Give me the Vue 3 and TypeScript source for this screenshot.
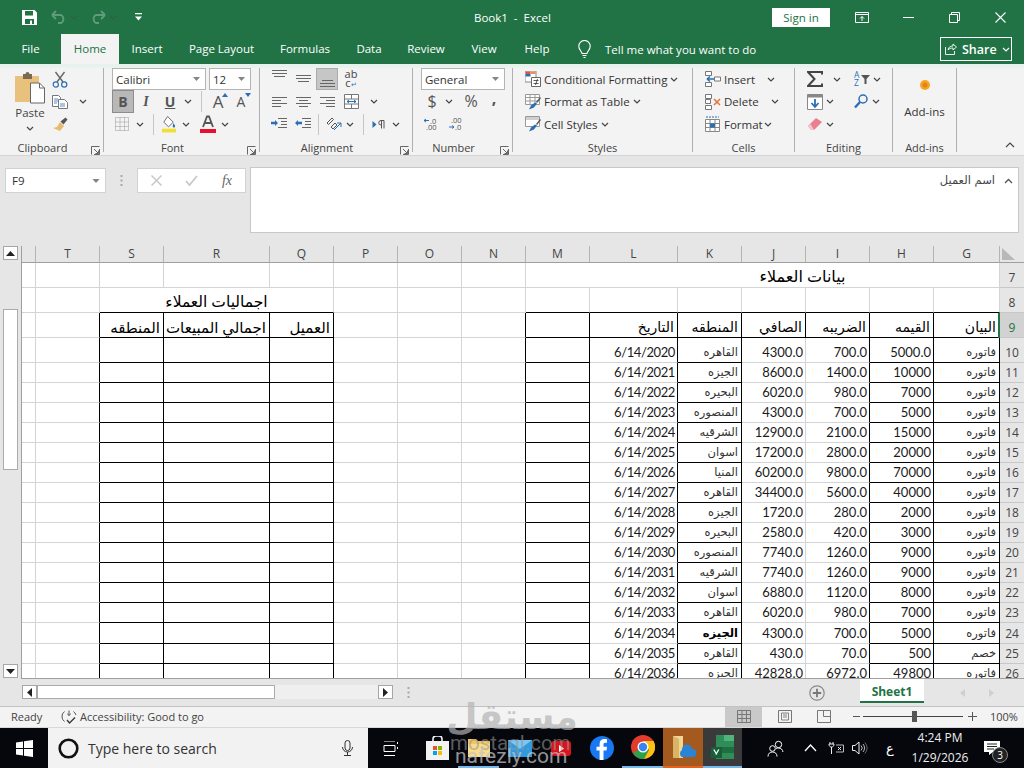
<template>
  <div class="app">
    <svg class="sprite" aria-hidden="true">
      <symbol id="chev" viewBox="0 0 8 5"><path d="M1 1l3 3 3-3" fill="none" stroke="#444" stroke-width="1.2" /></symbol>
      <symbol id="launch" viewBox="0 0 9 9"><path d="M.5 8.5V.5h8M8.5 3v5.500H3M3 3l4.500 4.500M7.500 4.500v3h-3" fill="none" stroke="#666" stroke-width="1" /></symbol>
      <symbol id="tri-up" viewBox="0 0 9 5"><path d="M4.500 0L9 5H0z" fill="#222" /></symbol>
      <symbol id="tri-down" viewBox="0 0 9 5"><path d="M0 0h9L4.500 5z" fill="#222" /></symbol>
    </svg>

    <header class="titlebar">
      <div class="qat">
        <svg class="save" width="15" height="15" viewBox="0 0 15 15"><path d="M0 0h12.500L15 2.500V15H0z" fill="#fff" /><path d="M3 1h8v4.500H3zM3 9h9v5H3z" fill="#217346" /><path d="M8 10.500h2V14H8z" fill="#fff" /></svg>
        <svg class="ml14" width="16" height="14" viewBox="0 0 16 14"><path d="M1 5l4-4M1 5l4 4M1 5h9a4.500 4.500 0 0 1 0 8H7" fill="none" stroke="#5f9c7c" stroke-width="1.800" /></svg>
        <svg class="ml3" width="8" height="5"><use href="#chev" class="faded" /></svg>
        <svg class="ml12" width="16" height="14" viewBox="0 0 16 14"><path d="M15 5l-4-4M15 5l-4 4M15 5H6a4.500 4.500 0 0 0 0 8h3" fill="none" stroke="#5f9c7c" stroke-width="1.800" /></svg>
        <svg class="ml3" width="8" height="5"><use href="#chev" class="faded" /></svg>
        <svg class="ml18" width="7" height="8" viewBox="0 0 7 8"><path d="M0 0h7v1.200H0zM0 3.500h7L3.500 7.500z" fill="#fff" /></svg>
      </div>
      <div class="doc-title">Book1&nbsp; -&nbsp; Excel</div>
      <button class="signin">Sign in</button>
      <div class="winbtn ml9">
        <svg width="14" height="11" viewBox="0 0 14 11"><path d="M.5.500h13v10H.5zM.5 2.500h13M7 9V4.500M5 6.500l2-2 2 2" fill="none" stroke="#fff" /></svg>
      </div>
      <div class="winbtn"><svg width="11" height="1"><path d="M0 .500h11" stroke="#fff" /></svg></div>
      <div class="winbtn">
        <svg width="11" height="11" viewBox="0 0 11 11"><path d="M.5 2.500h8v8h-8zM2.500 2.500v-2h8v8h-2" fill="none" stroke="#fff" /></svg>
      </div>
      <div class="winbtn"><svg width="11" height="11" viewBox="0 0 11 11"><path d="M.5.500l10 10M10.500.500l-10 10" stroke="#fff" stroke-width="1.100" /></svg></div>
    </header>

    <nav class="tabs">
      <span class="tab w-file">File</span>
      <span class="tab tab-on w-home">Home</span>
      <span class="tab w-insert">Insert</span>
      <span class="tab w-layout">Page Layout</span>
      <span class="tab w-formulas">Formulas</span>
      <span class="tab w-data">Data</span>
      <span class="tab w-review">Review</span>
      <span class="tab w-view">View</span>
      <span class="tab w-help">Help</span>
      <svg class="ml16" width="13" height="18" viewBox="0 0 13 18"><path d="M4 13.500C3.500 11 .8 9.800.8 6.200a5.700 5.700 0 0 1 11.400 0c0 3.600-2.700 4.800-3.200 7.300zM4.500 15.500h4M5.500 17.500h2" fill="none" stroke="#fff" stroke-width="1.100" /></svg>
      <span class="tellme">Tell me what you want to do</span>
      <div class="share">
        <svg width="12" height="12" viewBox="0 0 12 12"><path d="M.5 4v7.500h9V8M3 7c.5-3 2.500-4 5-4V1l3.500 3L8 7V5C5.800 5 4.200 5.500 3 7z" fill="none" stroke="#fff" stroke-width=".9" /></svg>
        <span>Share</span>
        <svg width="8" height="5" viewBox="0 0 8 5"><path d="M1 1l3 3 3-3" fill="none" stroke="#fff" stroke-width="1.200" /></svg>
      </div>
    </nav>

    <section class="ribbon">
      <div class="group g-clip">
        <div class="body flexrow">
          <div class="paste">
            <svg width="30" height="33" viewBox="0 0 30 33">
              <path d="M0 5h24v26H0z" fill="#e8c27d" />
              <path d="M8 3h2.500a2 2 0 0 1 4 0H17v5H8z" fill="#7b6a50" />
              <path d="M15.500 12h9l5 5v15h-14z" fill="#fff" stroke="#666" />
              <path d="M24.500 12v5h5" fill="none" stroke="#666" />
            </svg>
            <span class="paste-t">Paste</span>
            <svg class="chev" width="8" height="5"><use href="#chev" /></svg>
          </div>
          <div class="col ml7">
            <div class="row">
              <svg width="16" height="17" viewBox="0 0 16 17"><path d="M3.500 1L11 11M12.500 1L5 11" stroke="#666" stroke-width="1.400" /><circle cx="3.800" cy="13.500" r="2.600" fill="none" stroke="#2a6fb5" stroke-width="1.200" /><circle cx="12.200" cy="13.500" r="2.600" fill="none" stroke="#2a6fb5" stroke-width="1.200" /></svg>
            </div>
            <div class="row">
              <svg width="16" height="14" viewBox="0 0 16 14"><path d="M.5.500h6l2 2v9H.5z" fill="#fff" stroke="#777" /><path d="M6.500 4.500h6l3 3v6h-9z" fill="#fff" stroke="#777" /><path d="M2 4h4M2 6h4M2 8h3M8 9h5M8 11h5" stroke="#2a6fb5" stroke-width=".8" /></svg>
              <svg class="ml11" width="8" height="5"><use href="#chev" /></svg>
            </div>
            <div class="row">
              <svg width="16" height="15" viewBox="0 0 16 15"><path d="M8 5l4 4-4 5-7-3 4-1z" fill="#e6bb6e" /><path d="M8.500 4.500l5-4 2 2-4 5z" fill="#555" /></svg>
            </div>
          </div>
        </div>
        <div class="label">Clipboard<svg class="launcher" width="9" height="9"><use href="#launch" /></svg></div>
      </div>

      <div class="group g-font">
        <div class="body">
          <div class="row">
            <div class="combo w-fontname"><span>Calibri</span><svg width="7" height="4"><use href="#tri-down" class="dim" /></svg></div>
            <div class="combo w-fontsize ml3"><span>12</span><svg width="7" height="4"><use href="#tri-down" class="dim" /></svg></div>
          </div>
          <div class="row">
            <span class="tbtn tbtn-on b">B</span>
            <span class="tbtn w24 i">I</span>
            <span class="tbtn w24 u">U</span>
            <svg class="bx12" width="8" height="5"><use href="#chev" /></svg>
            <i class="vsep ml7"></i>
            <span class="tbtn w22 ml5 grow">A<svg class="caret" width="6" height="4"><path d="M3 0l3 4H0z" fill="#2a6fb5" /></svg></span>
            <span class="tbtn w22 ml1 shrink">A<svg class="caret" width="6" height="4"><path d="M0 0h6L3 4z" fill="#2a6fb5" /></svg></span>
          </div>
          <div class="row">
            <svg class="w20" width="14" height="14" viewBox="0 0 14 14"><path d="M.5.500h13v13H.5zM.5 5h13M.5 9.500h13M5 .500v13M9.500.500v13" fill="none" stroke="#999" stroke-width="1" stroke-dasharray="1 1" /></svg>
            <svg class="bx12 ml2" width="8" height="5"><use href="#chev" /></svg>
            <i class="vsep ml7"></i>
            <svg class="w20 ml5" width="17" height="18" viewBox="0 0 17 18"><path d="M7 1l6 6-5 5-5-5z" fill="#fff" stroke="#666" /><path d="M13 8c1 1.500 2 2.500 2 3.500a1.200 1.200 0 0 1-2.500 0c0-1 .5-2 .5-3.500z" fill="#2a6fb5" /><path d="M1 14h15v4H1z" fill="#f2df33" /></svg>
            <svg class="bx12 ml1" width="8" height="5"><use href="#chev" /></svg>
            <svg class="w20 ml6" width="16" height="18" viewBox="0 0 16 18"><path d="M3 12L7 1.500h2L13 12M4.800 8h6.400" fill="none" stroke="#555" stroke-width="1.800" /><path d="M0 14h16v4H0z" fill="#e8112d" /></svg>
            <svg class="bx12 ml1" width="8" height="5"><use href="#chev" /></svg>
          </div>
        </div>
        <div class="label">Font<svg class="launcher" width="9" height="9"><use href="#launch" /></svg></div>
      </div>

      <div class="group g-align">
        <div class="body">
          <div class="row">
            <span class="abtn"><svg width="15" height="22" viewBox="0 0 15 22"><path d="M0 2.500h15M0 5.500h15M2 8.500h11" stroke="#666" /></svg></span>
            <span class="abtn ml2"><svg width="15" height="22" viewBox="0 0 15 22"><path d="M0 7.500h15M0 10.500h15M2 13.500h11" stroke="#666" /></svg></span>
            <span class="abtn ml2 abtn-on"><svg width="15" height="20" viewBox="0 0 15 20"><path d="M2 11.500h11M0 14.500h15M0 17.500h15" stroke="#666" /></svg></span>
            <span class="abtn ml2 wrap-ic">
              <span class="wrap-t">ab<br />c<small>↵</small></span>
            </span>
          </div>
          <div class="row">
            <span class="abtn"><svg width="15" height="10" viewBox="0 0 15 10"><path d="M0 .500h15M0 3.500h9M0 6.500h15M0 9.500h9" stroke="#666" /></svg></span>
            <span class="abtn ml2"><svg width="15" height="10" viewBox="0 0 15 10"><path d="M0 .500h15M3 3.500h9M0 6.500h15M3 9.500h9" stroke="#666" /></svg></span>
            <span class="abtn ml2"><svg width="15" height="10" viewBox="0 0 15 10"><path d="M0 .500h15M6 3.500h9M0 6.500h15M6 9.500h9" stroke="#666" /></svg></span>
            <span class="abtn ml2"><svg width="15" height="15" viewBox="0 0 15 15"><path d="M.5.500h14v14H.5zM.5 5h14M.5 10h14M7.500.500V5M7.500 10v4.500" fill="#fff" stroke="#777" /><path d="M3 7.500h9M3 7.500l2-1.500M3 7.500l2 1.500M12 7.500l-2-1.500M12 7.500l-2 1.500" stroke="#2a6fb5" fill="none" /></svg></span>
            <svg class="bx12 ml6" width="8" height="5"><use href="#chev" /></svg>
          </div>
          <div class="row">
            <span class="abtn"><svg width="16" height="12" viewBox="0 0 16 12"><path d="M7 .500h9M10 3.500h6M10 6.500h6M7 9.500h9M0 5h6" stroke="#666" /><path d="M0 3.800h4V2l3 3-3 3V6.200H0z" fill="#2a6fb5" /></svg></span>
            <span class="abtn ml2"><svg width="16" height="12" viewBox="0 0 16 12"><path d="M7 .500h9M10 3.500h6M10 6.500h6M7 9.500h9" stroke="#666" /><path d="M7 3.800H3V2L0 5l3 3V6.200h4z" fill="#2a6fb5" /></svg></span>
            <i class="vsep ml4"></i>
            <svg class="w20 ml5" width="16" height="15" viewBox="0 0 16 15"><path d="M1 6l5-5 1.500 1.500-5 5zM5 10l4-4 2 2-4 4z" fill="none" stroke="#555" /><path d="M8 13l7-7M15 6v4M15 6h-4" fill="none" stroke="#2a6fb5" /></svg>
            <svg class="bx12" width="8" height="5"><use href="#chev" /></svg>
            <i class="vsep ml7"></i>
            <svg class="w20 ml5" width="13" height="9" viewBox="0 0 13 9"><path d="M0 1l4 3.500L0 8z" fill="#2a6fb5" /><path d="M9 8.500V.500M11.500 8.500V.500M11.500.500H8.500a2 2 0 0 0 0 4.500H9" fill="none" stroke="#555" /></svg>
            <svg class="bx12 ml1" width="8" height="5"><use href="#chev" /></svg>
          </div>
        </div>
        <div class="label">Alignment<svg class="launcher" width="9" height="9"><use href="#launch" /></svg></div>
      </div>

      <div class="group g-num">
        <div class="body">
          <div class="row">
            <div class="combo w-numfmt"><span>General</span><svg width="7" height="4"><use href="#tri-down" class="dim" /></svg></div>
          </div>
          <div class="row">
            <span class="nbtn w22 dollar">$</span>
            <svg class="bx12" width="8" height="5"><use href="#chev" /></svg>
            <span class="nbtn w22 ml5 pct">%</span>
            <span class="nbtn w20 ml2 comma">,</span>
          </div>
          <div class="row">
            <svg class="w20" width="16" height="14" viewBox="0 0 16 14"><path d="M1 3.500h5M1 3.500l2-1.500M1 3.500L3 5" stroke="#2a6fb5" fill="none" /><text x="7" y="6.500" class="dec">.0</text><text x="3" y="13" class="dec">.00</text></svg>
            <svg class="w20 ml5" width="16" height="14" viewBox="0 0 16 14"><text x="3" y="6" class="dec">.00</text><path d="M1 10h5M6 10L4 8.500M6 10l-2 1.500" stroke="#2a6fb5" fill="none" /><text x="7" y="13" class="dec">.0</text></svg>
          </div>
        </div>
        <div class="label">Number<svg class="launcher" width="9" height="9"><use href="#launch" /></svg></div>
      </div>

      <div class="group g-styles">
        <div class="body">
          <div class="row">
            <svg width="16" height="16" viewBox="0 0 16 16"><path d="M0 0h11v11H0z" fill="#fff" stroke="#888" /><path d="M.5.500h5v2.500h-5z" fill="#d9534f" /><path d="M.5 3h5v2.500h-5z" fill="#2a6fb5" /><path d="M5.500.500h5v2.500h-5z" fill="#e8905a" /><path d="M6.500 6.500h9v9h-9z" fill="#fff" stroke="#666" /><path d="M8.500 9.500h5M8.500 12.500h5M12.500 8l-2 6" stroke="#333" stroke-width=".8" /></svg>
            <span class="rt">Conditional Formatting</span>
            <svg class="ml3" width="8" height="5"><use href="#chev" /></svg>
          </div>
          <div class="row">
            <svg width="16" height="16" viewBox="0 0 16 16"><path d="M.5.500h14v10H.5zM.5 3.500h14M.5 7h14M5 .500v10M10 .500v10" fill="#fff" stroke="#999" /><path d="M4 15.500l2-4 4-3 2 1-3 4z" fill="#2a6fb5" /><path d="M11 8l4-5 1 1-4 5z" fill="#555" /></svg>
            <span class="rt">Format as Table</span>
            <svg class="ml3" width="8" height="5"><use href="#chev" /></svg>
          </div>
          <div class="row">
            <svg width="16" height="16" viewBox="0 0 16 16"><path d="M.5.500h14v10H.5z" fill="#fff" stroke="#999" /><path d="M1 1h13v3H1z" fill="#cfcfcf" /><path d="M4 15.500l2-4 4-3 2 1-3 4z" fill="#2a6fb5" /><path d="M11 8l4-5 1 1-4 5z" fill="#555" /></svg>
            <span class="rt">Cell Styles</span>
            <svg class="ml3" width="8" height="5"><use href="#chev" /></svg>
          </div>
        </div>
        <div class="label">Styles</div>
      </div>

      <div class="group g-cells">
        <div class="body">
          <div class="row">
            <svg width="16" height="16" viewBox="0 0 16 16"><path d="M.5.500h6v4h-6zM.5 11.500h6v4h-6zM9.500 6h6v4h-6z" fill="#fff" stroke="#777" /><path d="M9 8H2M2 8l3-2.500M2 8l3 2.500" fill="none" stroke="#2a6fb5" stroke-width="1.400" /></svg>
            <span class="rt w-ins">Insert</span>
            <svg width="8" height="5"><use href="#chev" /></svg>
          </div>
          <div class="row">
            <svg width="16" height="16" viewBox="0 0 16 16"><path d="M.5.500h6v4h-6zM.5 5.500h5v4h-5zM.5 11.500h6v4h-6z" fill="#fff" stroke="#777" /><path d="M9 5l6 6M15 5l-6 6" stroke="#e2723b" stroke-width="1.500" /></svg>
            <span class="rt w-del">Delete</span>
            <svg width="8" height="5"><use href="#chev" /></svg>
          </div>
          <div class="row">
            <svg width="16" height="16" viewBox="0 0 16 16"><path d="M.5 3.500h14v12H.5zM.5 7.500h14M.5 11.500h14M5 3.500v12M10 3.500v12" fill="#fff" stroke="#888" /><path d="M5 7.500h5v4H5z" fill="#2a6fb5" /><path d="M1 1h13" stroke="#2a6fb5" stroke-dasharray="2 1" /></svg>
            <span class="rt w-fmt">Format</span>
            <svg width="8" height="5"><use href="#chev" /></svg>
          </div>
        </div>
        <div class="label">Cells</div>
      </div>

      <div class="group g-edit">
        <div class="body">
          <div class="row">
            <svg width="16" height="16" viewBox="0 0 16 16"><path d="M15 3.500V1H1l6.500 7L1 15h14v-2.500" fill="none" stroke="#444" stroke-width="2" /></svg>
            <svg class="ml10" width="8" height="5"><use href="#chev" /></svg>
            <svg class="ml13" width="17" height="16" viewBox="0 0 17 16"><text x="0" y="7" class="az">A</text><text x="0" y="15" class="az">Z</text><path d="M7 4h9l-3.500 4v5H10.500V8z" fill="#555" /></svg>
            <svg class="ml2" width="8" height="5"><use href="#chev" /></svg>
          </div>
          <div class="row">
            <svg width="16" height="16" viewBox="0 0 16 16"><path d="M.5.500h15v15H.5z" fill="#fff" stroke="#888" /><path d="M.5.500h15v3H.5z" fill="#888" /><path d="M8 5v8M4.500 9L8 13l3.500-4" fill="none" stroke="#2a6fb5" stroke-width="1.800" /></svg>
            <svg class="ml3" width="8" height="5"><use href="#chev" /></svg>
            <svg class="ml20" width="14" height="15" viewBox="0 0 14 15"><circle cx="9" cy="5" r="4" fill="none" stroke="#2a6fb5" stroke-width="1.500" /><path d="M6 8l-5 5.500" stroke="#2a6fb5" stroke-width="2.400" /></svg>
            <svg class="ml4" width="8" height="5"><use href="#chev" /></svg>
          </div>
          <div class="row">
            <svg width="16" height="14" viewBox="0 0 16 14"><path d="M1 9l8-8 6 4-8 8H4z" fill="#e8808f" /><path d="M1 9l3 4h3L3.500 7z" fill="#f6c6cc" /></svg>
            <svg class="ml3" width="8" height="5"><use href="#chev" /></svg>
          </div>
        </div>
        <div class="label">Editing</div>
      </div>

      <div class="group g-addin">
        <div class="body addin">
          <svg width="14" height="14" viewBox="0 0 14 14"><circle cx="7" cy="7" r="5" fill="#f5a623" /><circle cx="7" cy="7" r="2.500" fill="#e8801a" /></svg>
          <span class="addin-t">Add-ins</span>
        </div>
        <div class="label">Add-ins</div>
      </div>

      <div class="collapse">
        <svg width="10" height="6" viewBox="0 0 10 6"><path d="M1 5l4-4 4 4" fill="none" stroke="#444" stroke-width="1.100" /></svg>
      </div>
    </section>

    <section class="fbar">
      <div class="namebox"><span>F9</span><svg width="8" height="4"><use href="#tri-down" class="dim" /></svg></div>
      <svg class="ml14" width="3" height="11" viewBox="0 0 3 11"><path d="M1.500 0v2M1.500 4.500v2M1.500 9v2" stroke="#a8a8a8" stroke-width="2" /></svg>
      <div class="fbtns">
        <svg width="11" height="11" viewBox="0 0 11 11"><path d="M.5.500l10 10M10.500.500l-10 10" stroke="#c8c8c8" stroke-width="1.500" /></svg>
        <svg width="13" height="11" viewBox="0 0 13 11"><path d="M1 6l3.500 4L12 1" fill="none" stroke="#c8c8c8" stroke-width="1.800" /></svg>
        <span class="fx">fx</span>
      </div>
      <div class="finput">
        <span class="ftext">اسم العميل</span>
        <svg width="9" height="6" viewBox="0 0 9 6"><path d="M1 5l3.500-3.500L8 5" fill="none" stroke="#555" stroke-width="1.300" /></svg>
      </div>
    </section>

    <section class="sheet">
      <div class="vscroll">
        <div class="sbtn"><svg width="9" height="5"><use href="#tri-up" /></svg></div>
        <div class="vthumb"></div>
        <div class="vtrack"></div>
        <div class="sbtn"><svg width="9" height="5"><use href="#tri-down" /></svg></div>
      </div>
      <div class="grid">
        <div v-for="c in colNames" :key="c" class="colh">{{ c === 'U' ? '' : c }}</div>
        <div class="corner">
          <svg width="13" height="12" viewBox="0 0 13 12"><path d="M0 0l13 12H0z" fill="#b8b8b8" /></svg>
        </div>
        <template v-for="r in rows" :key="r.n">
          <div
            v-for="cell in r.cells"
            :key="cell.key"
            class="c"
            :class="cell.cls"
            :style="cell.span > 1 ? { gridColumn: `span ${cell.span}` } : undefined"
          >
            {{ cell.text }}
          </div>
          <div class="rowh" :class="{ 'rowh-on': r.n === 9 }">{{ r.n }}</div>
        </template>
      </div>
    </section>

    <section class="tabbar">
      <div class="hscroll">
        <div class="sbtn"><svg width="5" height="9" viewBox="0 0 5 9"><path d="M5 0v9L0 4.500z" fill="#222" /></svg></div>
        <div class="hthumb"></div>
        <div class="htrack"></div>
        <div class="sbtn"><svg width="5" height="9" viewBox="0 0 5 9"><path d="M0 0v9l5-4.500z" fill="#222" /></svg></div>
      </div>
      <svg class="ml15" width="3" height="11" viewBox="0 0 3 11"><path d="M1.500 0v2M1.500 4.500v2M1.500 9v2" stroke="#a8a8a8" stroke-width="2" /></svg>
      <svg class="addsheet" width="16" height="16" viewBox="0 0 16 16"><circle cx="8" cy="8" r="7.200" fill="none" stroke="#888" stroke-width="1.200" /><path d="M8 3.800v8.400M3.800 8h8.400" stroke="#777" stroke-width="1.800" /></svg>
      <div class="sheettab">Sheet1</div>
      <svg class="ml36" width="5" height="8" viewBox="0 0 5 8"><path d="M5 0v8L0 4z" fill="#cfcfcf" /></svg>
      <svg class="ml24" width="5" height="8" viewBox="0 0 5 8"><path d="M0 0v8l5-4z" fill="#cfcfcf" /></svg>
    </section>

    <footer class="status">
      <span class="ready">Ready</span>
      <svg class="acc-ic" width="16" height="14" viewBox="0 0 16 14"><path d="M3.500 1.500A6 6 0 0 0 1 7a6 6 0 0 0 2.500 4.500M12.500 1.500c1 .8 2 2 2.500 3.500M8 .500v5M6.200 3.800L8 5.500l1.800-1.700" fill="none" stroke="#555" /><path d="M6 10l2.500 3L14 7.500" fill="none" stroke="#333" stroke-width="1.300" /></svg>
      <span class="acc">Accessibility: Good to go</span>
      <div class="view-on">
        <svg width="14" height="13" viewBox="0 0 14 13"><path d="M.5.500h13v12H.5zM.5 4.500h13M.5 8.500h13M5 .500v12M9.500.500v12" fill="none" stroke="#777" /></svg>
      </div>
      <svg class="ml16" width="14" height="13" viewBox="0 0 14 13"><path d="M.5.500h13v12H.5z" fill="none" stroke="#777" /><path d="M3.500 3h7v7h-7zM5 5h4M5 7h4" fill="none" stroke="#777" stroke-width=".9" /></svg>
      <svg class="ml25" width="14" height="13" viewBox="0 0 14 13"><path d="M.5.500h13v12H.5zM6.500.500v6h7" fill="none" stroke="#777" /></svg>
      <svg class="ml22" width="7" height="1"><path d="M0 .500h7" stroke="#555" /></svg>
      <div class="slider"><i class="slider-thumb"></i></div>
      <svg class="ml5" width="9" height="9" viewBox="0 0 9 9"><path d="M4.500 0v9M0 4.500h9" stroke="#555" /></svg>
      <span class="zoom">100%</span>
    </footer>

    <footer class="taskbar">
      <div class="start">
        <svg width="17" height="17" viewBox="0 0 17 17"><path d="M0 2.500l7-1v6.500H0zM8 1.300L17 0v8H8zM0 9h7v6.500l-7-1zM8 9h9v8l-9-1.300z" fill="#fff" /></svg>
      </div>
      <div class="search">
        <svg width="21" height="21" viewBox="0 0 21 21"><circle cx="10.500" cy="10.500" r="8.800" fill="none" stroke="#111" stroke-width="2.600" /></svg>
        <span class="search-t">Type here to search</span>
        <svg width="11" height="16" viewBox="0 0 11 16"><rect x="3" y=".5" width="5" height="10" rx="2.500" fill="none" stroke="#333" /><path d="M.5 7a5 5 0 0 0 10 0M5.500 12v3M2 15.500h7" fill="none" stroke="#333" /></svg>
      </div>
      <svg class="ml15" width="16" height="15" viewBox="0 0 16 15"><path d="M1 0h11M1 14.500h11M1 4.500h11v6H1zM14.500 1v2M14.500 6v2" fill="none" stroke="#fff" /></svg>
      <div class="tb-item ml18">
        <svg width="23" height="24" viewBox="0 0 23 24"><path d="M0 5h23v19H0z" fill="#f2f2f2" /><path d="M7 7V3a3 3 0 0 1 3-3h3a3 3 0 0 1 3 3v4" fill="none" stroke="#f2f2f2" stroke-width="1.600" /><path d="M7 10h4v4H7z" fill="#e8532a" /><path d="M12 10h4v4h-4z" fill="#7fba00" /><path d="M7 15h4v4H7z" fill="#00a4ef" /><path d="M12 15h4v4h-4z" fill="#ffb900" /></svg>
      </div>
      <div class="tb-item tb-run">
        <svg width="22" height="20" viewBox="0 0 22 20"><path d="M0 2h8l2 2h12v16H0z" fill="#f1c65e" /><path d="M0 7h22v13H0z" fill="#f8dc8c" /></svg>
      </div>
      <div class="tb-item">
        <svg width="24" height="17" viewBox="0 0 24 17"><path d="M0 0h24v17H0z" fill="#2f9ae0" /><path d="M0 0l12 9L24 0" fill="#7cc6f2" /></svg>
      </div>
      <div class="tb-item">
        <svg width="20" height="15" viewBox="0 0 20 15"><rect width="20" height="15" rx="3" fill="#d9141e" /><path d="M8 4l5 3.500L8 11z" fill="#fff" /></svg>
      </div>
      <div class="tb-item">
        <svg width="24" height="24" viewBox="0 0 24 24"><circle cx="12" cy="12" r="12" fill="#1877f2" /><path d="M13.500 24V14.500h3l.5-3.800h-3.500V8.500c0-1 .4-1.800 1.900-1.800H17V3.300c-.4 0-1.500-.2-2.700-.2-2.800 0-4.700 1.700-4.700 4.800v2.800H6.500v3.800h3.100V24z" fill="#fff" /></svg>
      </div>
      <div class="tb-item tb-run">
        <svg width="24" height="24" viewBox="0 0 24 24"><circle cx="12" cy="12" r="12" fill="#e33b2e" /><path d="M12 12L2 18a12 12 0 0 0 11 6l5-9z" fill="#2aa24b" /><path d="M12 6h10.500A12 12 0 0 1 13 24l5-9z" fill="#fbc113" /><circle cx="12" cy="12" r="5.500" fill="#fff" /><circle cx="12" cy="12" r="4.200" fill="#3b84f0" /></svg>
      </div>
      <div class="tb-folder">
        <svg width="26" height="22" viewBox="0 0 26 22"><path d="M3 0h10v22H3z" fill="#f1d593" /><path d="M3 0l6 3v19H3z" fill="#d9b467" /><path d="M12 14a5 5 0 0 1 10-1 4 4 0 0 1 1 8H12a4 4 0 0 1 0-7z" fill="#2a84d6" /></svg>
      </div>
      <div class="tb-excel">
        <svg width="24" height="24" viewBox="0 0 24 24"><path d="M5 0h18v24H5z" fill="#2f8e58" /><path d="M13 0h10v6H13z" fill="#50b37a" /><path d="M5 12h18v6H5z" fill="#1f6e42" /><path d="M0 12h11v11H0z" fill="#165f37" /><path d="M2.800 14.500l3 5M7.800 14.500l-3 5" stroke="#fff" stroke-width="1.300" /></svg>
      </div>
      <svg class="ml25" width="17" height="17" viewBox="0 0 17 17"><circle cx="11.500" cy="4.500" r="3.200" fill="none" stroke="#fff" /><circle cx="5.500" cy="8.500" r="2.800" fill="none" stroke="#fff" /><path d="M1 16.500c0-3 2-4.500 4.500-4.500S10 13.500 10 16.500M9 9c1-1 1.500-1 2.500-1 2.500 0 4 1.500 4.500 4" fill="none" stroke="#fff" /></svg>
      <svg class="ml20" width="13" height="8" viewBox="0 0 13 8"><path d="M1 7l5.500-6L12 7" fill="none" stroke="#fff" stroke-width="1.300" /></svg>
      <svg class="ml11" width="16" height="13" viewBox="0 0 16 13"><path d="M1 2h5M2 0v2M5 0v2M1 2c0 2 1 3 2.500 3S6 4 6 2M3.500 5v7" fill="none" stroke="#eee" /><path d="M8 3h7.500v7H8" fill="none" stroke="#bbb" /><path d="M10 5l3 3M13 5l-3 3" stroke="#eee" /></svg>
      <svg class="ml8" width="16" height="14" viewBox="0 0 16 14"><path d="M.5 4.500h2.500L7 1v12L3 9.500H.5z" fill="none" stroke="#eee" /><path d="M9 4.500a3.500 3.500 0 0 1 0 5M11 3a6 6 0 0 1 0 8" fill="none" stroke="#bbb" /><path d="M13 1.500a9 9 0 0 1 0 11" fill="none" stroke="#666" /></svg>
      <span class="lang">ع</span>
      <div class="clock"><span>4:24 PM</span><span>1/29/2026</span></div>
      <div class="notif">
        <svg width="16" height="14" viewBox="0 0 16 14"><path d="M0 0h16v11H9l-4 3v-3H0z" fill="#fff" /><path d="M3 3h10M3 5.500h10M3 8h7" stroke="#222" /></svg>
        <span class="badge">3</span>
      </div>
    </footer>

    <div class="watermark">
      <span class="wm-ar">مستقل</span>
      <span class="wm-a">mostaql.com</span>
      <span class="wm-b">nafezly.com</span>
    </div>
  </div>
</template>

<script setup lang="ts">
interface Cell {
  key: string
  text: string
  cls: string[]
  span: number
}

const colNames = ['U', 'T', 'S', 'R', 'Q', 'P', 'O', 'N', 'M', 'L', 'K', 'J', 'I', 'H', 'G']

const invoice = 'فاتوره'
// G, H, I, J, K  (L is a running date)
const data: [string, string, string, string, string][] = [
  [invoice, '5000.0', '700.0', '4300.0', 'القاهره'],
  [invoice, '10000', '1400.0', '8600.0', 'الجيزه'],
  [invoice, '7000', '980.0', '6020.0', 'البحيره'],
  [invoice, '5000', '700.0', '4300.0', 'المنصوره'],
  [invoice, '15000', '2100.0', '12900.0', 'الشرقيه'],
  [invoice, '20000', '2800.0', '17200.0', 'اسوان'],
  [invoice, '70000', '9800.0', '60200.0', 'المنيا'],
  [invoice, '40000', '5600.0', '34400.0', 'القاهره'],
  [invoice, '2000', '280.0', '1720.0', 'الجيزه'],
  [invoice, '3000', '420.0', '2580.0', 'البحيره'],
  [invoice, '9000', '1260.0', '7740.0', 'المنصوره'],
  [invoice, '9000', '1260.0', '7740.0', 'الشرقيه'],
  [invoice, '8000', '1120.0', '6880.0', 'اسوان'],
  [invoice, '7000', '980.0', '6020.0', 'القاهره'],
  [invoice, '5000', '700.0', '4300.0', 'الجيزه'],
  ['خصم', '500', '70.0', '430.0', 'القاهره'],
  [invoice, '49800', '6972.0', '42828.0', 'الجيزه']
]

const headers: Record<string, string> = {
  S: 'المنطقه',
  R: 'اجمالي المبيعات',
  Q: 'العميل',
  L: 'التاريخ',
  K: 'المنطقه',
  J: 'الصافي',
  I: 'الضريبه',
  H: 'القيمه',
  G: 'البيان'
}

const leftTable = ['S', 'R', 'Q']
const rightTable = ['M', 'L', 'K', 'J', 'I', 'H', 'G']

function textFor(col: string, n: number): { text: string; cls: string[] } {
  if (n === 9 && headers[col]) {
    return { text: headers[col], cls: leftTable.includes(col) ? ['hd', 'hd-left'] : ['hd'] }
  }
  if (n < 10) return { text: '', cls: [] }
  const row = data[n - 10]
  if (col === 'L') return { text: `6/14/${2010 + n}`, cls: ['num', 'date'] }
  if (col === 'G') return { text: row[0], cls: ['ar'] }
  if (col === 'H') return { text: row[1], cls: ['num'] }
  if (col === 'I') return { text: row[2], cls: ['num'] }
  if (col === 'J') return { text: row[3], cls: ['num'] }
  if (col === 'K') return { text: row[4], cls: n === 24 ? ['ar', 'strong'] : ['ar'] }
  return { text: '', cls: [] }
}

function borders(col: string, n: number): string[] {
  const out: string[] = []
  const inLeft = leftTable.includes(col)
  const inRight = rightTable.includes(col)
  if (n >= 9) {
    if (col === 'T' || col === 'N' || inLeft) out.push('br')
    if (inRight && (col !== 'J' || n === 9)) out.push('br')
    if (inLeft || (inRight && n === 9) || ['M', 'K', 'H', 'G'].includes(col)) out.push('bb')
  }
  if (n === 8 && inRight) out.push('bb')
  return out
}

function cellsFor(n: number): Cell[] {
  const cells: Cell[] = []
  for (const col of colNames) {
    if (n === 7 && col === 'M') {
      cells.push({ key: col, text: 'بيانات العملاء', cls: ['title', 'title-main'], span: 7 })
      continue
    }
    if (n === 8 && col === 'S') {
      cells.push({ key: col, text: 'اجماليات العملاء', cls: ['title', 'bb'], span: 3 })
      continue
    }
    if (n === 7 && rightTable.includes(col)) continue
    if (n === 8 && leftTable.includes(col)) continue
    const t = textFor(col, n)
    const cls = [...t.cls, ...borders(col, n)]
    if (n === 9 && col === 'G') cls.push('sel')
    cells.push({ key: col, text: t.text, cls, span: 1 })
  }
  return cells
}

const rows = Array.from({ length: 20 }, (_, i) => ({ n: i + 7, cells: cellsFor(i + 7) }))
</script>

<style>
html,
body {
  margin: 0;
  padding: 0;
  background: #e6e6e6;
  overflow: hidden;
}
</style>

<style scoped>
.app {
  position: relative;
  width: 1024px;
  height: 768px;
  overflow: hidden;
  display: flex;
  flex-direction: column;
  font-family: "Open Sans", "Noto Sans", sans-serif;
  font-size: 11.500px;
  color: #444;
}
.sprite {
  position: absolute;
  width: 0;
  height: 0;
}
svg {
  flex: none;
  display: block;
}
.faded {
  opacity: 0.4;
}
.dim {
  opacity: 0.55;
}

.ml1 { margin-left: 1px; }
.ml2 { margin-left: 2px; }
.ml3 { margin-left: 3px; }
.ml4 { margin-left: 4px; }
.ml5 { margin-left: 5px; }
.ml6 { margin-left: 6px; }
.ml7 { margin-left: 7px; }
.ml8 { margin-left: 8px; }
.ml9 { margin-left: 9px; }
.ml10 { margin-left: 10px; }
.ml11 { margin-left: 11px; }
.ml12 { margin-left: 12px; }
.ml13 { margin-left: 13px; }
.ml14 { margin-left: 14px; }
.ml15 { margin-left: 15px; }
.ml16 { margin-left: 16px; }
.ml18 { margin-left: 18px; }
.ml20 { margin-left: 20px; }
.ml22 { margin-left: 22px; }
.ml24 { margin-left: 24px; }
.ml25 { margin-left: 25px; }
.ml36 { margin-left: 36px; }

/* title bar */
.titlebar {
  height: 34px;
  flex: none;
  display: flex;
  align-items: center;
  background: #217346;
  color: #fff;
}
.qat {
  width: 474px;
  flex: none;
  display: flex;
  align-items: center;
  padding-left: 22px;
  box-sizing: border-box;
}
.save {
  margin-top: 1px;
}
.doc-title {
  width: 298px;
  flex: none;
  white-space: nowrap;
}
.signin {
  width: 58px;
  height: 19px;
  padding: 0;
  border: 0;
  background: #fff;
  color: #217346;
  font: 11.500px "Open Sans", sans-serif;
}
.winbtn {
  width: 46px;
  height: 30px;
  flex: none;
  display: flex;
  align-items: center;
  justify-content: center;
}

/* tabs */
.tabs {
  height: 30px;
  flex: none;
  display: flex;
  align-items: center;
  background: #217346;
  color: #fff;
}
.tab {
  height: 30px;
  line-height: 29px;
  text-align: center;
  flex: none;
}
.tab-on {
  background: #f3f3f3;
  color: #217346;
}
.w-file { width: 61px; }
.w-home { width: 58px; }
.w-insert { width: 56px; }
.w-layout { width: 93px; }
.w-formulas { width: 74px; }
.w-data { width: 54px; }
.w-review { width: 60px; }
.w-view { width: 56px; }
.w-help { width: 50px; }
.tellme {
  margin-left: 14px;
  width: 335px;
  flex: none;
}
.share {
  width: 72px;
  height: 24px;
  box-sizing: border-box;
  border: 1px solid #fff;
  display: flex;
  align-items: center;
  gap: 5px;
  padding-left: 4px;
  font-size: 12.500px;
  font-weight: 600;
}

/* ribbon */
.ribbon {
  height: 92px;
  flex: none;
  box-sizing: border-box;
  padding-top: 4px;
  display: flex;
  background: linear-gradient(#e6f2ec 0, #e6f2ec 3px, #f3f3f3 4px);
  border-bottom: 1px solid #d4d4d4;
}
.group {
  height: 84px;
  flex: none;
  box-sizing: border-box;
  border-right: 1px solid #b0b0b0;
  display: flex;
  flex-direction: column;
}
.g-clip { width: 104px; }
.g-font { width: 156px; padding-left: 8px; }
.g-align { width: 153px; padding-left: 8px; }
.g-num { width: 100px; padding-left: 8px; }
.g-styles { width: 180px; padding-left: 12px; }
.g-cells { width: 102px; padding-left: 12px; }
.g-edit { width: 98px; padding-left: 12px; }
.g-addin { width: 64px; }
.body {
  height: 70px;
  flex: none;
}
.flexrow {
  display: flex;
}
.col {
  display: flex;
  flex-direction: column;
}
.row {
  height: 22.500px;
  display: flex;
  align-items: center;
}
.label {
  position: relative;
  height: 14px;
  line-height: 20px;
  text-align: center;
  font-size: 11px;
  color: #444;
  margin-left: -8px;
  padding-right: 18px;
}
.g-clip .label {
  margin-left: 0;
}
.g-addin .label {
  margin-left: 0;
  padding-right: 0;
}
.g-styles .label,
.g-cells .label,
.g-edit .label {
  margin-left: -12px;
  padding-right: 0;
}
.launcher {
  position: absolute;
  right: 3px;
  top: 8px;
}
.paste {
  width: 30px;
  margin-left: 15px;
  padding-top: 3px;
  display: flex;
  flex-direction: column;
  align-items: center;
}
.paste-t {
  margin-top: 1px;
  line-height: 16px;
  height: 18px;
}
.chev {
  margin-top: 3px;
}
.combo {
  height: 22px;
  box-sizing: border-box;
  background: #fff;
  border: 1px solid #b4b4b4;
  display: flex;
  align-items: center;
  justify-content: space-between;
  padding: 0 5px 0 3px;
  color: #333;
}
.w-fontname { width: 94px; }
.w-fontsize { width: 42px; }
.w-numfmt { width: 84px; }
.tbtn {
  position: relative;
  height: 23px;
  line-height: 23px;
  text-align: center;
  flex: none;
  font-size: 14px;
  color: #555;
}
.tbtn-on {
  width: 22px;
  box-sizing: border-box;
  line-height: 21px;
  background: #b8b8b8;
  border: 1px solid #8d8d8d;
}
.w24 { width: 24px; }
.w22 { width: 22px; flex: none; }
.w20 { width: 20px; flex: none; }
.b { font-weight: 700; }
.i { font-style: italic; font-family: "Liberation Serif", serif; font-weight: 700; }
.u { font-weight: 700; text-decoration: underline; }
.bx12 {
  box-sizing: content-box;
  padding: 0 2px;
  flex: none;
}
.vsep {
  width: 1px;
  height: 21px;
  background: #c6c6c6;
  flex: none;
}
.grow { font-size: 17px; }
.shrink { font-size: 14px; }
.caret {
  position: absolute;
  right: 1px;
  top: 3px;
}
svg.w20 {
  box-sizing: border-box;
  padding: 0 2px;
}
.abtn {
  width: 22px;
  height: 22px;
  flex: none;
  box-sizing: border-box;
  display: flex;
  align-items: center;
  justify-content: center;
}
.abtn-on {
  background: #c6c6c6;
  border: 1px solid #ababab;
}
.wrap-t {
  font-size: 11px;
  line-height: 9px;
  text-align: center;
}
.wrap-t small {
  font-size: 7px;
  color: #2a6fb5;
}
.nbtn {
  height: 23px;
  text-align: center;
  line-height: 23px;
  color: #555;
}
.dollar { font-size: 16px; }
.pct { font-size: 16px; }
.comma { font-size: 16px; font-weight: 700; line-height: 16px; }
.dec {
  font-size: 7.500px;
  fill: #555;
  font-family: "Open Sans", sans-serif;
}
.az {
  font-size: 8.500px;
  fill: #2a6fb5;
  font-family: "Open Sans", sans-serif;
}
.rt {
  margin-left: 3px;
  flex: none;
  color: #333;
  white-space: nowrap;
}
.w-ins { width: 43px; }
.w-del { width: 47px; }
.w-fmt { width: 40px; }
.addin {
  display: flex;
  flex-direction: column;
  align-items: center;
  padding-top: 10px;
  box-sizing: border-box;
}
.addin-t {
  margin-top: 12px;
  color: #333;
}
.collapse {
  flex: 1;
  display: flex;
  justify-content: flex-end;
  align-items: flex-end;
  padding: 0 9px 7px 0;
}

/* formula bar */
.fbar {
  height: 90px;
  flex: none;
  box-sizing: border-box;
  padding: 11px 5px 0 5px;
  display: flex;
  align-items: flex-start;
  background: #e6e6e6;
}
.namebox {
  width: 101px;
  height: 25px;
  box-sizing: border-box;
  margin-top: 1px;
  background: #fff;
  border: 1px solid #d2d2d2;
  display: flex;
  align-items: center;
  justify-content: space-between;
  padding: 0 5px 0 6px;
  color: #333;
}
.fbar > svg {
  margin-top: 8px;
}
.fbtns {
  width: 109px;
  height: 25px;
  box-sizing: border-box;
  margin: 1px 0 0 14px;
  background: #fff;
  border: 1px solid #d2d2d2;
  display: flex;
  align-items: center;
  justify-content: space-between;
  padding: 0 13px;
}
.fx {
  font-family: "Liberation Serif", serif;
  font-style: italic;
  font-size: 14px;
  color: #666;
}
.finput {
  margin-left: 4px;
  width: 769px;
  height: 66px;
  box-sizing: border-box;
  background: #fff;
  border: 1px solid #c8c8c8;
  display: flex;
  justify-content: flex-end;
  padding: 10px 5px 0 0;
}
.ftext {
  font-family: "DejaVu Sans", sans-serif;
  font-size: 11.500px;
  line-height: 14px;
  margin: -5px 9px 0 0;
  color: #444;
}

/* sheet */
.sheet {
  height: 433px;
  flex: none;
  display: flex;
  background: #e6e6e6;
}
.vscroll {
  width: 21px;
  height: 432px;
  flex: none;
  box-sizing: border-box;
  padding-left: 3px;
  display: flex;
  flex-direction: column;
}
.sbtn {
  width: 15px;
  height: 14px;
  flex: none;
  box-sizing: border-box;
  background: #fff;
  border: 1px solid #a6a6a6;
  display: flex;
  align-items: center;
  justify-content: center;
}
.vthumb {
  width: 15px;
  height: 161px;
  margin-top: 49px;
  box-sizing: border-box;
  background: #fff;
  border: 1px solid #ababab;
  flex: none;
}
.vtrack {
  flex: 1;
}
.grid {
  width: 1003px;
  height: 433px;
  overflow: hidden;
  display: grid;
  grid-template-columns: 14px 64px 64px 106px 64px 64px 64px 64px 64px 88px 64px 64px 64px 64px 66px 24px;
  grid-template-rows: 17px repeat(4, 25px) repeat(13, 20px) 21px 20px 20px;
  background: #fff;
  box-sizing: border-box;
  border-bottom: 1px solid #9f9f9f;
  border-left: 1px solid #9f9f9f;
  font-family: Lato, "DejaVu Sans", sans-serif;
  font-size: 13px;
  color: #1a1a1a;
}
.colh {
  background: #e6e6e6;
  border-right: 1px solid #b4b4b4;
  border-bottom: 1px solid #9f9f9f;
  box-sizing: border-box;
  text-align: center;
  line-height: 15px;
  font-family: "Open Sans", sans-serif;
  font-size: 12px;
  color: #444;
}
.corner {
  background: #e6e6e6;
  border-bottom: 1px solid #9f9f9f;
  box-sizing: border-box;
  padding: 2px 0 0 2px;
}
.rowh {
  background: #e6e6e6;
  border-bottom: 1px solid #c8c8c8;
  box-sizing: border-box;
  text-align: center;
  font-family: "Open Sans", sans-serif;
  font-size: 12px;
  color: #444;
  display: flex;
  align-items: flex-end;
  justify-content: center;
  line-height: 18px;
}
.rowh-on {
  background: #d2d2d2;
  color: #217346;
}
.c {
  min-width: 0;
  box-sizing: border-box;
  border-right: 1px solid #d4d4d4;
  border-bottom: 1px solid #d4d4d4;
  padding: 0 2px 1px 0;
  display: flex;
  align-items: flex-end;
  justify-content: flex-end;
  line-height: 18px;
  white-space: nowrap;
  overflow: hidden;
}
.br {
  border-right-color: #000;
}
.bb {
  border-bottom-color: #000;
}
.num {
  color: #1a1a1a;
}
.date {
  letter-spacing: -0.4px;
}
.ar {
  font-size: 11.500px;
  color: #333;
  padding-right: 3px;
}
.strong {
  font-weight: 700;
  color: #000;
}
.hd {
  font-size: 14px;
  color: #000;
  padding-right: 3px;
}
.hd-left {
  font-size: 15px;
}
.title {
  font-size: 15.500px;
  color: #000;
  justify-content: center;
  padding: 0 0 2px;
}
.title-main {
  font-size: 16px;
  padding-left: 80px;
}
.sel {
  position: relative;
  overflow: visible;
}
.sel::after {
  content: "";
  position: absolute;
  right: -1px;
  top: 0;
  bottom: -1px;
  width: 2px;
  background: #217346;
}

/* sheet tabs */
.tabbar {
  height: 28px;
  flex: none;
  display: flex;
  align-items: center;
  background: #e6e6e6;
  box-sizing: border-box;
  border-bottom: 1px solid #c2c2c2;
}
.hscroll {
  margin-left: 22px;
  width: 370px;
  flex: none;
  display: flex;
  margin-top: -1px;
}
.hthumb {
  width: 238px;
  height: 14px;
  box-sizing: border-box;
  background: #fff;
  border: 1px solid #ababab;
  flex: none;
}
.htrack {
  width: 103px;
  flex: none;
  background: #efefef;
}
.addsheet {
  margin-left: 399px;
}
.sheettab {
  width: 64px;
  height: 24px;
  box-sizing: border-box;
  margin: -4px 0 0 35px;
  background: #fff;
  border-bottom: 2px solid #217346;
  color: #217346;
  font-size: 12px;
  font-weight: 700;
  text-align: center;
  line-height: 25px;
}

/* status */
.status {
  height: 21px;
  flex: none;
  display: flex;
  align-items: center;
  background: #f3f3f3;
  border-bottom: 1px solid #d8d8d8;
  box-sizing: border-box;
  padding-bottom: 1px;
  font-size: 11px;
  color: #444;
}
.ready {
  margin-left: 11px;
  width: 50px;
  flex: none;
}
.acc-ic {
  flex: none;
}
.acc {
  margin-left: 3px;
  width: 131px;
  flex: none;
  white-space: nowrap;
}
.view-on {
  margin-left: 514px;
  width: 37px;
  height: 20px;
  flex: none;
  background: #c9c9c9;
  display: flex;
  align-items: center;
  justify-content: center;
}
.slider {
  position: relative;
  margin-left: 3px;
  width: 100px;
  height: 1px;
  flex: none;
  background: #444;
}
.slider-thumb {
  position: absolute;
  left: 49px;
  top: -5px;
  width: 5px;
  height: 11px;
  background: #555;
}
.zoom {
  margin-left: 13px;
  flex: none;
}

/* taskbar */
.taskbar {
  height: 40px;
  flex: none;
  display: flex;
  align-items: center;
  background: #05070d;
  color: #fff;
}
.start {
  width: 48px;
  flex: none;
  display: flex;
  justify-content: center;
}
.search {
  width: 320px;
  height: 40px;
  flex: none;
  box-sizing: border-box;
  background: #f2f2f2;
  display: flex;
  align-items: center;
  padding-left: 10px;
  color: #333;
  font-size: 14px;
}
.search-t {
  margin-left: 9px;
  width: 254px;
  flex: none;
  white-space: nowrap;
}
.tb-item {
  width: 41px;
  height: 40px;
  flex: none;
  box-sizing: border-box;
  display: flex;
  align-items: center;
  justify-content: center;
}
.tb-run {
  border-bottom: 2px solid #76b9ed;
}
.tb-folder {
  width: 40px;
  height: 40px;
  flex: none;
  background: #a4591f;
  border-bottom: 2px solid #e8611a;
  box-sizing: border-box;
  display: flex;
  align-items: center;
  justify-content: center;
}
.tb-excel {
  width: 39px;
  height: 40px;
  flex: none;
  background: #3a3a3a;
  border-bottom: 2px solid #76b9ed;
  box-sizing: border-box;
  display: flex;
  align-items: center;
  justify-content: center;
}
.lang {
  margin-left: 17px;
  width: 10px;
  flex: none;
  font-family: "DejaVu Sans", sans-serif;
  font-size: 13px;
  text-align: center;
}
.clock {
  margin-left: 7px;
  width: 76px;
  flex: none;
  display: flex;
  flex-direction: column;
  align-items: center;
  font-size: 12px;
  line-height: 20px;
  color: #eee;
}
.notif {
  position: relative;
  margin-left: 6px;
  width: 24px;
  flex: none;
}
.badge {
  position: absolute;
  left: 8px;
  top: 6px;
  width: 16px;
  height: 16px;
  box-sizing: border-box;
  border: 1px solid #888;
  border-radius: 50%;
  background: #222;
  font-size: 10px;
  line-height: 14px;
  text-align: center;
}

/* translucent stamp over the bottom of the picture */
.watermark {
  position: absolute;
  left: 446px;
  top: 700px;
  width: 135px;
  height: 68px;
  color: rgba(196, 196, 196, 0.75);
  pointer-events: none;
}
.watermark span {
  position: absolute;
  white-space: nowrap;
}
.wm-ar {
  left: 0;
  top: -4px;
  width: 132px;
  text-align: center;
  font-family: "DejaVu Sans", sans-serif;
  font-size: 36px;
  font-weight: 700;
  color: rgba(178, 178, 178, 0.7);
}
.wm-a {
  left: 4px;
  top: 31px;
  font-family: Roboto, sans-serif;
  font-size: 20.500px;
  color: rgba(150, 150, 150, 0.6);
}
.wm-b {
  left: 9px;
  top: 44px;
  font-family: Roboto, sans-serif;
  font-size: 21px;
}
</style>
